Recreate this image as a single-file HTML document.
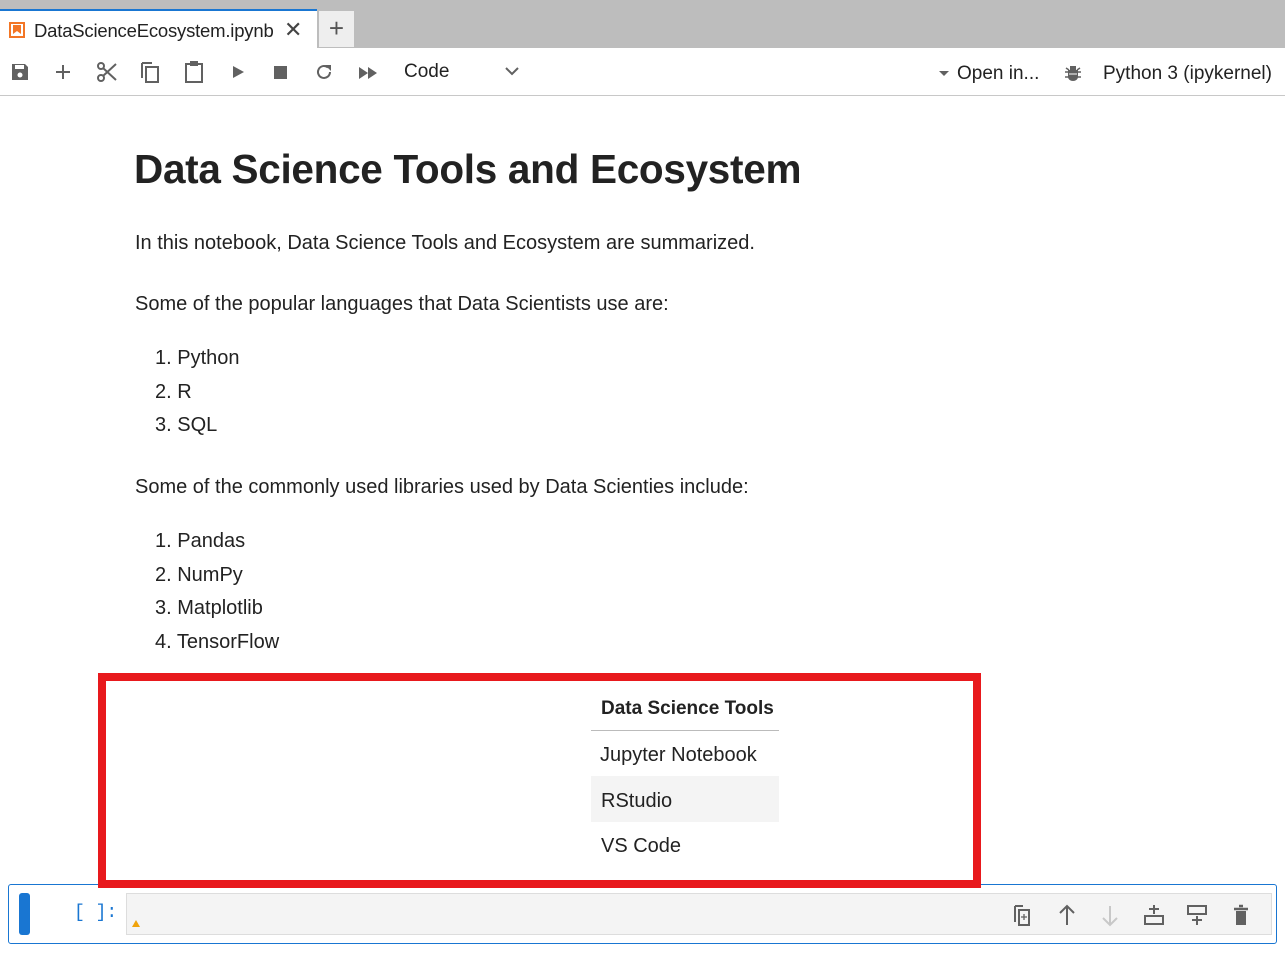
<!DOCTYPE html>
<html><head><style>
*{margin:0;padding:0;box-sizing:border-box}
body{width:1285px;height:963px;overflow:hidden;background:#fff;font-family:"Liberation Sans",sans-serif;color:#212121;position:relative}
.top{position:absolute;left:0;top:0;width:1285px;height:48px;background:#bdbdbd}
.tab{position:absolute;left:0;top:9px;width:317px;height:39px;background:#fff;border-top:2px solid #1976d2}
.tab .t{position:absolute;left:34px;top:9px;font-size:18.5px;color:#222;letter-spacing:-0.2px}
.tab .x{position:absolute;left:284px;top:6px;font-size:22px;color:#444}
.plus{position:absolute;left:319px;top:11px;width:35px;height:36px;background:#eee;font-size:26px;text-align:center;line-height:34px;color:#555}
.tb{position:absolute;left:0;top:48px;width:1285px;height:48px;border-bottom:1px solid #c8c8c8}
.tb svg{position:absolute}
.tx{position:absolute;font-size:19px;color:#222}
.c{position:absolute;left:135px;font-size:20px;color:#222;white-space:nowrap}
h1{position:absolute;left:134px;top:146px;font-size:40.5px;font-weight:bold;color:#222;white-space:nowrap;letter-spacing:-0.3px}
.red{position:absolute;left:98px;top:673px;width:883px;height:215px;border:8px solid #e8191d}
.cell{position:absolute;left:8px;top:884px;width:1269px;height:60px;border:1px solid #1976d2;border-radius:3px}
.bar{position:absolute;left:10px;top:8px;width:11px;height:42px;background:#1976d2;border-radius:3px}
.inp{position:absolute;left:117px;top:8px;width:1146px;height:42px;background:#f4f4f4;border:1px solid #ddd}
</style></head><body>
<div class="top"></div>
<div class="tab">
<svg style="position:absolute;left:9px;top:11px" width="16" height="16"><rect x="1" y="1" width="14" height="14" fill="#fff" stroke="#f37626" stroke-width="2"/><path d="M4 3h8v9l-4-3-4 3z" fill="#f37626"/></svg>
<span class="t">DataScienceEcosystem.ipynb</span><span class="x">✕</span></div>
<div class="plus">+</div>
<div class="tb">
<svg style="left:10px;top:14px" width="20" height="20" viewBox="0 0 20 20"><path d="M2 2h13l3 3v13H2z" fill="#616161"/><rect x="5" y="3" width="9" height="4" fill="#fff"/><circle cx="10" cy="13" r="2.5" fill="#fff"/></svg>
<svg style="left:53px;top:14px" width="20" height="20"><path d="M10 3v14M3 10h14" stroke="#616161" stroke-width="2"/></svg>
<svg style="left:96px;top:13px" width="22" height="22"><circle cx="5" cy="17" r="3" fill="none" stroke="#616161" stroke-width="2"/><circle cx="5" cy="5" r="3" fill="none" stroke="#616161" stroke-width="2"/><path d="M7 7l13 12M7 15L20 3" stroke="#616161" stroke-width="2"/></svg>
<svg style="left:139px;top:12px" width="22" height="24"><path d="M3 3v15" stroke="#616161" stroke-width="2" fill="none"/><path d="M3 3h10" stroke="#616161" stroke-width="2"/><rect x="7" y="7" width="12" height="15" fill="none" stroke="#616161" stroke-width="2"/></svg>
<svg style="left:183px;top:12px" width="22" height="24"><rect x="3" y="4" width="16" height="18" fill="none" stroke="#616161" stroke-width="2"/><rect x="7" y="1" width="8" height="5" fill="#616161"/></svg>
<svg style="left:230px;top:16px" width="16" height="16"><path d="M3 2l11 6-11 6z" fill="#616161"/></svg>
<svg style="left:273px;top:17px" width="16" height="16"><rect x="1" y="1" width="13" height="13" fill="#616161"/></svg>
<svg style="left:314px;top:14px" width="20" height="20"><path d="M16 10a6 6 0 1 1-2-4.5" fill="none" stroke="#616161" stroke-width="2"/><path d="M11 3h6v6z" fill="#616161"/></svg>
<svg style="left:358px;top:17px" width="22" height="16"><path d="M1 2l9 6-9 6zM10 2l9 6-9 6z" fill="#616161"/></svg>
<span class="tx" style="left:404px;top:13px">Code</span>
<svg style="left:504px;top:17px" width="16" height="12"><path d="M2 3l6 6 6-6" fill="none" stroke="#616161" stroke-width="2"/></svg>
<svg style="left:938px;top:22px" width="12" height="8"><path d="M1 1h10l-5 5z" fill="#616161"/></svg>
<span class="tx" style="left:957px;top:15px">Open in...</span>
<svg style="left:1063px;top:14px" width="20" height="20"><path d="M5 8h10v7a5 4 0 0 1-10 0zM7 4h6v4H7z" fill="#616161"/><path d="M2 10h16M2 15h16M3 6l3 2M17 6l-3 2" stroke="#616161" stroke-width="1.5"/><path d="M6 12h8" stroke="#fff" stroke-width="1"/></svg>
<span class="tx" style="left:1103px;top:15px">Python 3 (ipykernel)</span>
</div>
<h1>Data Science Tools and Ecosystem</h1>
<div class="c" style="top:232px">In this notebook, Data Science Tools and Ecosystem are summarized.</div>
<div class="c" style="top:293px">Some of the popular languages that Data Scientists use are:</div>
<div class="c" style="left:155px;top:347px">1. Python</div>
<div class="c" style="left:155px;top:381px">2. R</div>
<div class="c" style="left:155px;top:414px">3. SQL</div>
<div class="c" style="top:476px">Some of the commonly used libraries used by Data Scienties include:</div>
<div class="c" style="left:155px;top:530px">1. Pandas</div>
<div class="c" style="left:155px;top:564px">2. NumPy</div>
<div class="c" style="left:155px;top:597px">3. Matplotlib</div>
<div class="c" style="left:155px;top:631px">4. TensorFlow</div>
<div style="position:absolute;left:591px;top:776px;width:188px;height:46px;background:#f4f4f4"></div>
<div style="position:absolute;left:591px;top:730px;width:188px;height:1px;background:#bbb"></div>
<div class="c" style="left:601px;top:698px;font-weight:bold;font-size:19px">Data Science Tools</div>
<div class="c" style="left:600px;top:744px">Jupyter Notebook</div>
<div class="c" style="left:601px;top:790px">RStudio</div>
<div class="c" style="left:601px;top:835px">VS Code</div>
<div class="cell"><div class="bar"></div>
<span style="position:absolute;left:65px;top:18px;font-family:'Liberation Mono',monospace;font-size:18px;color:#1976d2">[ ]:</span>
<div class="inp"><svg style="position:absolute;left:4px;top:24px" width="10" height="10"><path d="M1 9l4-7 4 7z" fill="#f0a30a"/></svg>
<svg style="position:absolute;left:884px;top:9px" width="250" height="24" fill="none" stroke="#616161" stroke-width="2">
<path d="M4 3v16M4 3h8"/><rect x="8" y="7" width="10" height="15"/><path d="M13 11v6M10 14h6" stroke-width="1.3"/>
<path d="M56 22V3M49 10l7-7 7 7"/>
<path d="M99 3v19M92 15l7 7 7-7" stroke="#c8c8c8"/>
<path d="M143 2v9M138 6h10"/><rect x="134" y="13" width="18" height="8"/>
<rect x="177" y="3" width="18" height="8"/><path d="M186 13v9M181 17h10"/>
<path d="M223 6h14M228 3h4" stroke-width="2.5"/><rect x="225" y="8" width="10" height="14" fill="#616161" stroke="none"/>
</svg></div>
</div>
<div class="red"></div>
</body></html>
